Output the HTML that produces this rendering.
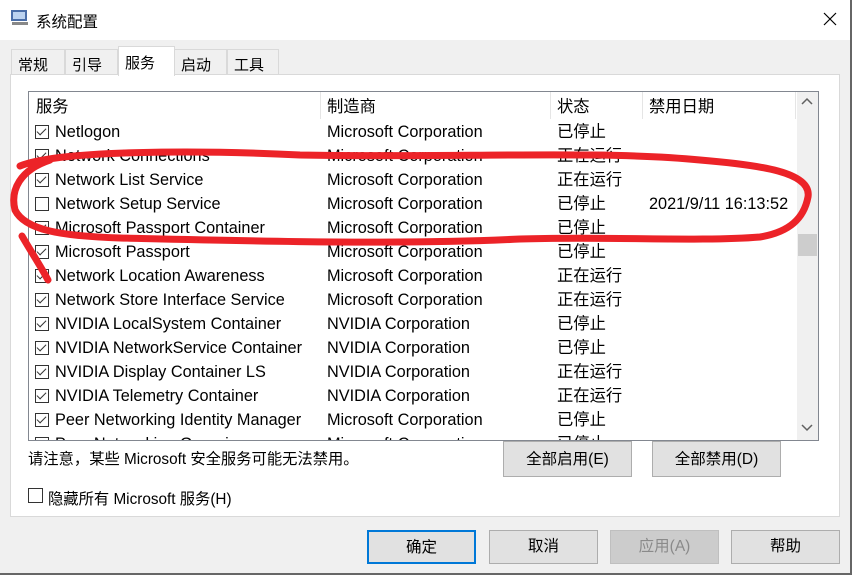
<!DOCTYPE html>
<html><head><meta charset="utf-8"><style>
*{margin:0;padding:0;box-sizing:border-box}
body{width:852px;height:575px;background:#f0f0f0;font-family:"Liberation Sans","Noto Sans CJK SC",sans-serif;font-size:15px;color:#000;position:relative;overflow:hidden}
.abs{position:absolute}
.title{left:0;top:0;width:852px;height:40px;background:#fff}
.tab{top:49px;height:26px;background:#f0f0f0;border:1px solid #d9d9d9;border-bottom:none;padding:4px 0 0 6px;font-size:15px}
.panel{left:10px;top:74px;width:830px;height:443px;background:#fff;border:1px solid #d9d9d9}
.list{left:28px;top:91px;width:791px;height:350px;border:1px solid #828790;background:#fff;overflow:hidden;font-size:16.3px}
.row{position:absolute;left:0;height:24px;line-height:26px;width:770px;white-space:nowrap}
.row span{position:absolute}
.cb{position:absolute;left:6px;top:6px;width:14px;height:14px;border:1px solid #333;background:#fff}
.cb.c::after{content:"";position:absolute;left:3px;top:0px;width:4px;height:8px;border:solid #333;border-width:0 1.3px 1.3px 0;transform:rotate(45deg)}
.btn{background:#e1e1e1;border:1px solid #adadad;text-align:center;font-size:15.5px}
.sep{position:absolute;top:0;width:1px;height:27px;background:#e5e5e5}
</style></head><body>
<div class="abs title"></div>
<svg class="abs" style="left:10px;top:9px" width="20" height="18"><rect x="1" y="1" width="16" height="11" fill="#4a6ea8"/><rect x="3" y="3" width="12" height="7" fill="#bcd3f0"/><rect x="2" y="13" width="16" height="3" fill="#888"/></svg>
<div class="abs" style="left:36px;top:10px;font-size:15.5px">系统配置</div>
<svg class="abs" style="left:822px;top:11px" width="16" height="16"><path d="M2 2L14 14M14 2L2 14" stroke="#000" stroke-width="1.2"/></svg>
<div class="abs tab" style="left:11px;width:54px">常规</div>
<div class="abs tab" style="left:65px;width:53px">引导</div>
<div class="abs tab" style="left:174px;width:53px">启动</div>
<div class="abs tab" style="left:227px;width:52px">工具</div>
<div class="abs panel"></div>
<div class="abs tab" style="left:118px;top:46px;height:30px;width:57px;background:#fff;border-color:#d9d9d9;padding-top:5px">服务</div>
<div class="abs list">
 <div class="row" style="top:2px"><span style="left:7px">服务</span><span style="left:298px">制造商</span><span style="left:528px">状态</span><span style="left:620px">禁用日期</span></div>
 <div class="sep" style="left:291px"></div><div class="sep" style="left:521px"></div><div class="sep" style="left:613px"></div><div class="sep" style="left:766px"></div>
 <div class="row" style="top:27px"><i class="cb c"></i><span style="left:26px">Netlogon</span><span style="left:298px">Microsoft Corporation</span><span style="left:528px">已停止</span></div>
 <div class="row" style="top:51px"><i class="cb c"></i><span style="left:26px">Network Connections</span><span style="left:298px">Microsoft Corporation</span><span style="left:528px">正在运行</span></div>
 <div class="row" style="top:75px"><i class="cb c"></i><span style="left:26px">Network List Service</span><span style="left:298px">Microsoft Corporation</span><span style="left:528px">正在运行</span></div>
 <div class="row" style="top:99px"><i class="cb"></i><span style="left:26px">Network Setup Service</span><span style="left:298px">Microsoft Corporation</span><span style="left:528px">已停止</span><span style="left:620px">2021/9/11 16:13:52</span></div>
 <div class="row" style="top:123px"><i class="cb c"></i><span style="left:26px">Microsoft Passport Container</span><span style="left:298px">Microsoft Corporation</span><span style="left:528px">已停止</span></div>
 <div class="row" style="top:147px"><i class="cb c"></i><span style="left:26px">Microsoft Passport</span><span style="left:298px">Microsoft Corporation</span><span style="left:528px">已停止</span></div>
 <div class="row" style="top:171px"><i class="cb c"></i><span style="left:26px">Network Location Awareness</span><span style="left:298px">Microsoft Corporation</span><span style="left:528px">正在运行</span></div>
 <div class="row" style="top:195px"><i class="cb c"></i><span style="left:26px">Network Store Interface Service</span><span style="left:298px">Microsoft Corporation</span><span style="left:528px">正在运行</span></div>
 <div class="row" style="top:219px"><i class="cb c"></i><span style="left:26px">NVIDIA LocalSystem Container</span><span style="left:298px">NVIDIA Corporation</span><span style="left:528px">已停止</span></div>
 <div class="row" style="top:243px"><i class="cb c"></i><span style="left:26px">NVIDIA NetworkService Container</span><span style="left:298px">NVIDIA Corporation</span><span style="left:528px">已停止</span></div>
 <div class="row" style="top:267px"><i class="cb c"></i><span style="left:26px">NVIDIA Display Container LS</span><span style="left:298px">NVIDIA Corporation</span><span style="left:528px">正在运行</span></div>
 <div class="row" style="top:291px"><i class="cb c"></i><span style="left:26px">NVIDIA Telemetry Container</span><span style="left:298px">NVIDIA Corporation</span><span style="left:528px">正在运行</span></div>
 <div class="row" style="top:315px"><i class="cb c"></i><span style="left:26px">Peer Networking Identity Manager</span><span style="left:298px">Microsoft Corporation</span><span style="left:528px">已停止</span></div>
 <div class="row" style="top:339px"><i class="cb c"></i><span style="left:26px">Peer Networking Grouping</span><span style="left:298px">Microsoft Corporation</span><span style="left:528px">已停止</span></div>
 <div class="abs" style="left:768px;top:0;width:21px;height:348px;background:#f0f0f0"></div>
 <div class="abs" style="left:769px;top:142px;width:19px;height:22px;background:#cdcdcd"></div>
 <svg class="abs" style="left:772px;top:5px" width="12" height="10"><path d="M1 7L6 2L11 7" fill="none" stroke="#606060" stroke-width="1.5"/></svg>
 <svg class="abs" style="left:772px;top:330px" width="12" height="10"><path d="M1 3L6 8L11 3" fill="none" stroke="#606060" stroke-width="1.5"/></svg>
</div>
<div class="abs" style="left:28px;top:447px;font-size:15.3px">请注意，某些 Microsoft 安全服务可能无法禁用。</div>
<div class="abs btn" style="left:503px;top:441px;width:129px;height:36px;line-height:36px">全部启用(E)</div>
<div class="abs btn" style="left:652px;top:441px;width:129px;height:36px;line-height:36px">全部禁用(D)</div>
<div class="abs" style="left:28px;top:488px;width:15px;height:15px;border:1px solid #333;background:#fff"></div>
<div class="abs" style="left:48px;top:487px;font-size:15.3px">隐藏所有 Microsoft 服务(H)</div>
<div class="abs btn" style="left:367px;top:530px;width:109px;height:34px;line-height:32px;border:2px solid #0078d7">确定</div>
<div class="abs btn" style="left:489px;top:530px;width:109px;height:34px;line-height:32px">取消</div>
<div class="abs btn" style="left:610px;top:530px;width:109px;height:34px;line-height:32px;background:#cccccc;border-color:#bfbfbf;color:#8a8a8a">应用(A)</div>
<div class="abs btn" style="left:731px;top:530px;width:109px;height:34px;line-height:32px">帮助</div>
<div class="abs" style="left:850px;top:0;width:2px;height:575px;background:#666"></div>
<div class="abs" style="left:0;top:573px;width:852px;height:2px;background:#666"></div>
<svg class="abs" style="left:0;top:0" width="852" height="575"><path d="M20 166 C60 150,200 150,300 155 C450 158,600 150,700 160 C760 165,812 172,808 197 C804 218,790 232,760 237 C700 242,600 236,520 239 C400 245,250 241,120 238 C60 236,25 230,15 210 C10 190,20 170,50 160 M22 236 C30 250,40 265,48 280" fill="none" stroke="#ec2328" stroke-width="7" stroke-linecap="round"/></svg>
</body></html>
